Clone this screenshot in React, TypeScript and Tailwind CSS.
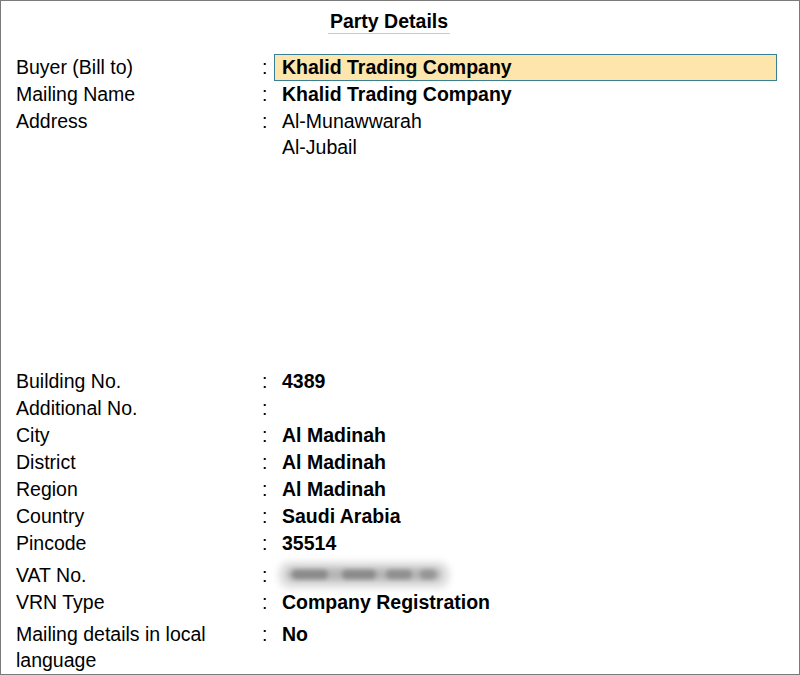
import React from "react";

const font = { fontFamily: '"Liberation Sans", Arial, sans-serif' };

function Row({
  label,
  value,
  bold = true,
  highlight = false,
  className = "",
}: {
  label: React.ReactNode;
  value?: React.ReactNode;
  bold?: boolean;
  highlight?: boolean;
  className?: string;
}) {
  return (
    <div className={`flex h-[27px] leading-[27px] ${className}`}>
      <div className="w-[245px] shrink-0">{label}</div>
      <div className="w-[13px] shrink-0 pl-[1px]">:</div>
      <div
        className={`flex-1 pl-[7px] border ${
          highlight ? "bg-[#fde5ab] border-[#3a7f98]" : "border-transparent"
        } ${bold ? "font-bold" : ""} leading-[25px]`}
      >
        {value}
      </div>
    </div>
  );
}

export default function App() {
  return (
    <div
      className="w-[800px] h-[675px] border border-[#7a7a7a] bg-white text-black text-[19.5px] overflow-hidden"
      style={font}
    >
      <div className="w-[776px]">
        <div className="h-[53px] flex justify-center items-start">
          <span className="mt-[8px] inline-block h-[25px] leading-[24px] px-[2px] font-bold border-b border-[#c9c9c9]">
            Party Details
          </span>
        </div>
        <div className="pl-[15px]">
          <Row label="Buyer (Bill to)" value="Khalid Trading Company" highlight />
          <Row label="Mailing Name" value="Khalid Trading Company" />
          <div className="flex h-[260px] leading-[26px]">
            <div className="w-[245px] shrink-0">Address</div>
            <div className="w-[13px] shrink-0 pl-[1px]">:</div>
            <div className="flex-1 pl-[8px]">
              <div>Al-Munawwarah</div>
              <div>Al-Jubail</div>
            </div>
          </div>
          <Row label="Building No." value="4389" />
          <Row label="Additional No." value="" />
          <Row label="City" value="Al Madinah" />
          <Row label="District" value="Al Madinah" />
          <Row label="Region" value="Al Madinah" />
          <Row label="Country" value="Saudi Arabia" />
          <Row label="Pincode" value="35514" />
          <div className="flex h-[27px] leading-[27px] mt-[5px]">
            <div className="w-[245px] shrink-0">VAT No.</div>
            <div className="w-[13px] shrink-0 pl-[1px]">:</div>
            <div className="flex-1 relative">
              <div className="absolute left-[4px] top-[-1px] w-[172px] h-[28px] bg-[#e4e4e4] rounded-[12px] blur-[3px]" />
              <div className="absolute left-[12px] top-[6px] w-[156px] h-[13px] bg-[#b4b4b4] rounded-full blur-[3px]" />
              <div className="absolute left-[18px] top-[8px] w-[36px] h-[9px] bg-[#8a8a8a] rounded-full blur-[2px]" />
              <div className="absolute left-[68px] top-[8px] w-[34px] h-[9px] bg-[#8a8a8a] rounded-full blur-[2px]" />
              <div className="absolute left-[112px] top-[8px] w-[26px] h-[9px] bg-[#8f8f8f] rounded-full blur-[2px]" />
              <div className="absolute left-[146px] top-[8px] w-[16px] h-[9px] bg-[#959595] rounded-full blur-[2px]" />
            </div>
          </div>
          <Row label="VRN Type" value="Company Registration" />
          <div className="flex leading-[26px] mt-[5px]">
            <div className="w-[245px] shrink-0 pr-[30px]">Mailing details in local language</div>
            <div className="w-[13px] shrink-0 pl-[1px]">:</div>
            <div className="flex-1 pl-[8px] font-bold">No</div>
          </div>
        </div>
      </div>
    </div>
  );
}
